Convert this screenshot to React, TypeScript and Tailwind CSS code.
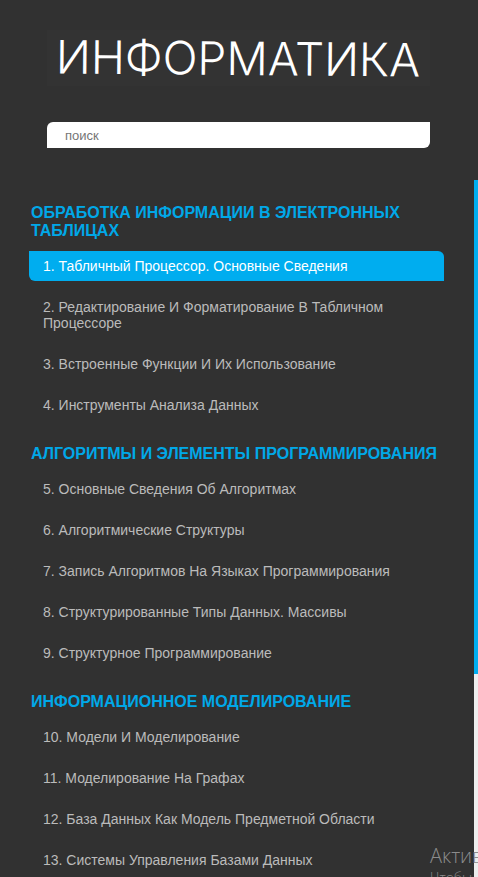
const sections = [
  {
    title: 'ОБРАБОТКА ИНФОРМАЦИИ В ЭЛЕКТРОННЫХ ТАБЛИЦАХ',
    items: [
      '1. Табличный Процессор. Основные Сведения',
      '2. Редактирование И Форматирование В Табличном Процессоре',
      '3. Встроенные Функции И Их Использование',
      '4. Инструменты Анализа Данных',
    ],
  },
  {
    title: 'АЛГОРИТМЫ И ЭЛЕМЕНТЫ ПРОГРАММИРОВАНИЯ',
    items: [
      '5. Основные Сведения Об Алгоритмах',
      '6. Алгоритмические Структуры',
      '7. Запись Алгоритмов На Языках Программирования',
      '8. Структурированные Типы Данных. Массивы',
      '9. Структурное Программирование',
    ],
  },
  {
    title: 'ИНФОРМАЦИОННОЕ МОДЕЛИРОВАНИЕ',
    items: [
      '10. Модели И Моделирование',
      '11. Моделирование На Графах',
      '12. База Данных Как Модель Предметной Области',
      '13. Системы Управления Базами Данных',
    ],
  },
];

const activeItem = sections[0].items[0];

function Header() {
  return (
    <header className="pr-11 pl-[47px]">
      <div className="flex h-14 items-center justify-center bg-[#333333]">
        <h1 className="rotate-[0.5deg] font-['Inter',sans-serif] text-[46px] leading-none font-light whitespace-nowrap text-white">
          ИНФОРМАТИКА
        </h1>
      </div>
      <input
        type="search"
        aria-label="Поиск"
        placeholder="поиск"
        className="mt-9 block h-[26px] w-full rounded-tl-md rounded-br-md bg-white px-[18px] text-[13px] text-[#333333] outline-none placeholder:text-[#757575]"
      />
    </header>
  );
}

function Contents() {
  return (
    <nav className="mt-14 flex flex-col gap-[25px] pr-[30px] pl-[29px]">
      {sections.map((section) => (
        <section key={section.title}>
          <h2 className="mb-[11px] pl-0.5 text-base leading-[18px] font-bold text-[#00a8e8]">{section.title}</h2>
          <ul className="flex flex-col gap-[11px]">
            {section.items.map((item) => (
              <li key={item}>
                <a
                  href="#"
                  className={
                    item === activeItem
                      ? 'block rounded-tr-md rounded-bl-md bg-[#00adef] px-3.5 py-[7px] text-sm leading-4 text-white'
                      : 'block px-3.5 py-[7px] text-sm leading-4 text-[#bbbbbb]'
                  }
                >
                  {item}
                </a>
              </li>
            ))}
          </ul>
        </section>
      ))}
    </nav>
  );
}

export default function App() {
  return (
    <div className="relative flex h-screen overflow-hidden bg-[#313131] font-['Liberation_Sans',Arial,sans-serif]">
      <aside className="min-w-0 flex-1 pt-[30px]">
        <Header />
        <Contents />
      </aside>
      <div className="flex w-1 flex-col pt-[180px]">
        <div className="h-[494px] bg-[#00adef]" />
        <div className="flex-1 bg-[#eeeeee]" />
      </div>
      <div className="pointer-events-none absolute top-[844px] left-[430px] font-['Open_Sans',sans-serif] font-light whitespace-nowrap text-[#8c8c8c]">
        <p className="text-xl leading-6">Актив</p>
        <p className="text-sm leading-5">Чтобы</p>
      </div>
    </div>
  );
}
